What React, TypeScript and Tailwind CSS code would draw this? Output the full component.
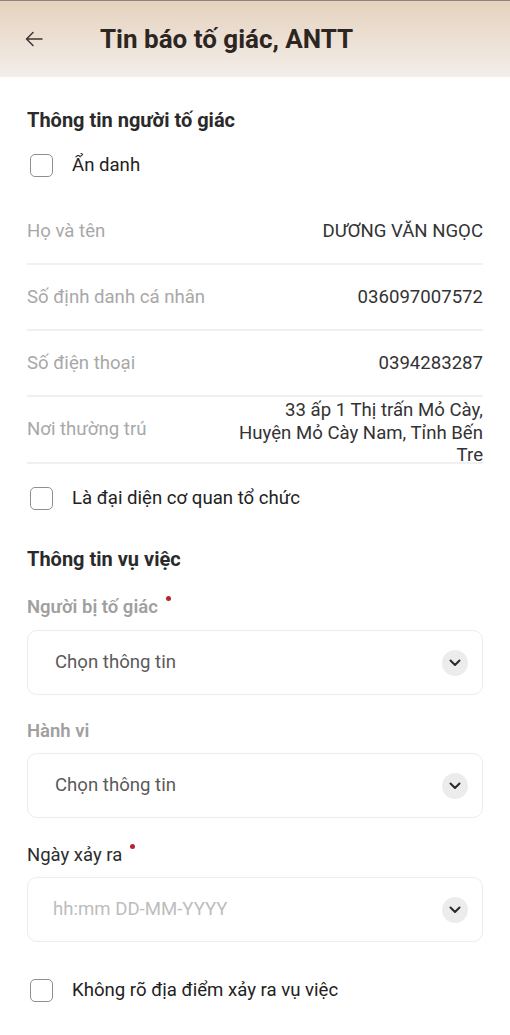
import React from 'react';

const rows = [
  { label: 'Họ và tên', value: 'DƯƠNG VĂN NGỌC' },
  { label: 'Số định danh cá nhân', value: '036097007572' },
  { label: 'Số điện thoại', value: '0394283287' },
];

function Checkbox({ label }: { label: string }) {
  return (
    <div className="flex items-center gap-[19px] pl-[3px]">
      <span className="size-[23px] rounded-[5px] border-[1.5px] border-[#8f8f8f] bg-white" />
      <span className="text-[18.6px] leading-[24px] text-[#222]">{label}</span>
    </div>
  );
}

function Chevron() {
  return (
    <span className="flex size-[26px] items-center justify-center rounded-full bg-[#ececec]">
      <svg width="12" height="8" viewBox="0 0 12 8" fill="none">
        <path d="M1.5 1.5 6 6l4.5-4.5" stroke="#2a2a2a" strokeWidth="2" strokeLinecap="round" strokeLinejoin="round" />
      </svg>
    </span>
  );
}

function SelectBox({ text, muted }: { text: string; muted?: boolean }) {
  return (
    <div
      className={`flex h-[65px] items-center justify-between rounded-[10px] border border-[#ececec] bg-white pr-[14px] ${
        muted ? 'pl-[25px]' : 'pl-[27px]'
      }`}
    >
      <span className={`text-[18.6px] ${muted ? 'text-[#bdbdbd]' : 'text-[#5a5a5a]'}`}>{text}</span>
      <Chevron />
    </div>
  );
}

function Label({ text, required, dark }: { text: string; required?: boolean; dark?: boolean }) {
  return (
    <div className="flex items-start">
      <span
        className={`text-[18.5px] leading-[24px] ${
          dark ? 'font-normal text-[#2c2c2c]' : 'font-semibold text-[#a0a0a0]'
        }`}
      >
        {text}
      </span>
      {required && <span className="ml-[8px] mt-[1px] size-[5px] rounded-full bg-[#b3272d]" />}
    </div>
  );
}

export default function App() {
  return (
    <div className="min-h-[1035px] bg-white font-['Roboto',sans-serif]">
      <header className="flex h-[77px] items-center border-t border-[#8a8580] bg-gradient-to-b from-[#e5d2be] to-[#f3eeea]">
        <svg className="ml-[25px]" width="18" height="16" viewBox="0 0 18 16" fill="none">
          <path d="M17 8H1.5M8 1.5 1.5 8 8 14.5" stroke="#3e3633" strokeWidth="1.5" strokeLinecap="round" strokeLinejoin="round" />
        </svg>
        <h1 className="ml-[57px] text-[26px] font-bold text-[#2d2522]">Tin báo tố giác, ANTT</h1>
      </header>

      <main className="px-[27px] pt-[30px]">
        <h2 className="text-[20px] font-bold leading-[26px] text-[#2a2a2a]">Thông tin người tố giác</h2>
        <div className="mt-[20px]">
          <Checkbox label="Ẩn danh" />
        </div>

        <div className="mt-[22px]">
          {rows.map((r) => (
            <div key={r.label} className="flex h-[66px] items-center justify-between border-b-2 border-[#f0f0f0] pt-[2px]">
              <span className="text-[18.6px] text-[#a8a8a8]">{r.label}</span>
              <span className="text-[18.6px] text-[#333]">{r.value}</span>
            </div>
          ))}
          <div className="flex h-[67px] items-center justify-between border-b-2 border-[#f0f0f0]">
            <span className="text-[18.6px] text-[#a8a8a8]">Nơi thường trú</span>
            <span className="w-[250px] self-start pt-[2px] text-right text-[18.6px] leading-[22.5px] text-[#333]">
              33 ấp 1 Thị trấn Mỏ Cày, Huyện Mỏ Cày Nam, Tỉnh Bến Tre
            </span>
          </div>
        </div>

        <div className="mt-[22px]">
          <Checkbox label="Là đại diện cơ quan tổ chức" />
        </div>

        <h2 className="mt-[36px] text-[20px] font-bold leading-[26px] text-[#2a2a2a]">Thông tin vụ việc</h2>

        <div className="mt-[23px]">
          <Label text="Người bị tố giác" required />
        </div>
        <div className="mt-[11px]">
          <SelectBox text="Chọn thông tin" />
        </div>

        <div className="mt-[24px]">
          <Label text="Hành vi" />
        </div>
        <div className="mt-[10px]">
          <SelectBox text="Chọn thông tin" />
        </div>

        <div className="mt-[25px]">
          <Label text="Ngày xảy ra" required dark />
        </div>
        <div className="mt-[10px]">
          <SelectBox text="hh:mm DD-MM-YYYY" muted />
        </div>

        <div className="mt-[36px]">
          <Checkbox label="Không rõ địa điểm xảy ra vụ việc" />
        </div>
      </main>
    </div>
  );
}
